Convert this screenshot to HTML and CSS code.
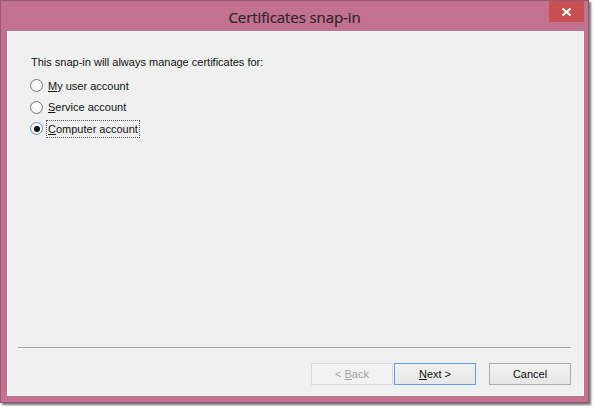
FILE: index.html
```html
<!DOCTYPE html>
<html>
<head>
<meta charset="utf-8">
<link rel="stylesheet" href="styles.css">
</head>
<body>
<div class="window">
  <div class="titlebar">
    <span class="title">Certificates snap-in</span>
    <div class="close"><svg width="11" height="10" viewBox="0 0 11 10"><path d="M1.5 1.5 L9.5 8.5 M9.5 1.5 L1.5 8.5" stroke="#fff" stroke-width="2.2" fill="none"/></svg></div>
  </div>
  <div class="client">
    <div class="content">
      <div class="prompt">This snap-in will always manage certificates for:</div>
      <div class="options">
        <div class="option"><span class="radio"></span><span class="label"><u>M</u>y user account</span></div>
        <div class="option"><span class="radio"></span><span class="label"><u>S</u>ervice account</span></div>
        <div class="option"><span class="radio checked"><span class="dot"></span></span><span class="label focus"><u>C</u>omputer account</span></div>
      </div>
    </div>
    <div class="footer">
      <div class="separator"></div>
      <div class="buttons">
        <div class="btn disabled"><span>&lt; <u>B</u>ack</span></div>
        <div class="btn default"><span><u>N</u>ext &gt;</span></div>
        <div class="btn cancel"><span>Cancel</span></div>
      </div>
    </div>
  </div>
</div>
</body>
</html>
```

FILE: styles.css
```css
html, body {
  margin: 0;
  padding: 0;
  background: #ffffff;
}
body {
  width: 594px;
  height: 407px;
  overflow: hidden;
  font-family: "Liberation Sans", Arial, sans-serif;
  font-size: 11px;
  color: #000;
}
.window {
  box-sizing: border-box;
  width: 589px;
  height: 403px;
  background: #c2718f;
  border: 1px solid #9a5676;
  box-shadow: 2px 2px 2px rgba(0, 0, 0, 0.55);
  display: flex;
  flex-direction: column;
}
.titlebar {
  position: relative;
  height: 30px;
  display: flex;
  align-items: center;
  justify-content: center;
}
.title {
  font-family: "Open Sans", "Noto Sans", sans-serif;
  font-size: 15px;
  color: #2e2328;
  letter-spacing: -0.1px;
  margin-top: 2px;
  -webkit-text-stroke: 0.2px #2e2328;
}
.close {
  position: absolute;
  top: 0;
  right: 4px;
  width: 35px;
  height: 21px;
  background: #c75050;
  display: flex;
  align-items: center;
  justify-content: center;
}
.client {
  flex: 1;
  margin: 0 4px 6px 6px;
  background: #f0f0f0;
  border: 1px solid #fbfbfb;
  display: flex;
  flex-direction: column;
}
.content {
  flex: 1;
  padding: 23px 0 0 23px;
}
.prompt {
  height: 14px;
  line-height: 14px;
  color: #111;
}
.options {
  margin-top: 6px;
  display: flex;
  flex-direction: column;
}
.option {
  height: 21.5px;
  display: flex;
  align-items: center;
}
.radio {
  box-sizing: border-box;
  width: 13px;
  height: 13px;
  border-radius: 50%;
  border: 1px solid #7a7a7a;
  background: radial-gradient(circle at 50% 40%, #ffffff 0%, #f4f4f4 60%, #e4e4e4 100%);
  margin-left: -1px;
  display: flex;
  align-items: center;
  justify-content: center;
}
.radio.checked {
  border-color: #5b9bd5;
}
.dot {
  width: 6px;
  height: 6px;
  border-radius: 50%;
  background: #111;
}
.label {
  margin-left: 3px;
  padding: 1px 1px;
  line-height: 14px;
  color: #111;
  border: 1px solid transparent;
}
.label.focus {
  border: 1px dotted #555;
}
.footer {
  padding: 0 12px 10px 10px;
}
.separator {
  height: 1px;
  background: #a0a0a0;
  border-bottom: 1px solid #ffffff;
}
.buttons {
  margin-top: 14px;
  display: flex;
  justify-content: flex-end;
}
.btn {
  box-sizing: border-box;
  width: 82px;
  height: 22px;
  border: 1px solid #acacac;
  background: linear-gradient(#f2f2f2, #e6e6e6);
  display: flex;
  align-items: center;
  justify-content: center;
  color: #111;
}
.btn.disabled {
  border-color: #d9d9d9;
  background: #f2f2f2;
  color: #a3a3a3;
}
.btn.default {
  margin-left: 1px;
  border-color: #5ba0e8;
  background: linear-gradient(#f2f2f2, #e8e8e8);
}
.btn.cancel {
  margin-left: 13px;
}
```
